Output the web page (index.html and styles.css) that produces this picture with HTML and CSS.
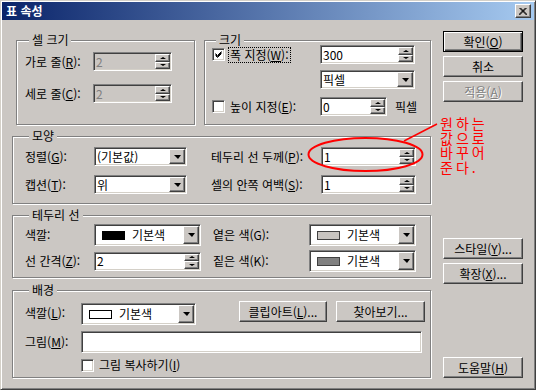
FILE: index.html
```html
<!DOCTYPE html>
<html lang="ko">
<head>
    <meta charset="UTF-8">
    <title>표 속성</title>
    <link rel="stylesheet" href="styles.css">
</head>
<body>
    <div class="window">
        <div class="titlebar">
            <span class="title">표 속성</span>
            <span class="close-btn">
                <svg width="8" height="7" viewBox="0 0 8 7"><path d="M0.5 0 L7.5 7 M1.5 0 L8.5 7 M6.5 0 L-0.5 7 M7.5 0 L0.5 7" stroke="#000" stroke-width="1" fill="none"/></svg>
            </span>
        </div>

        <div class="content">
            <div class="main">
                <div class="row-top">
                    <!-- 셀 크기 -->
                    <div class="group group-cell">
                        <div class="group-title">셀 크기</div>
                        <div class="line cell-row">
                            <span class="lbl cell-lbl">가로 줄(<u>R</u>):</span>
                            <div class="field disabled cell-field">
                                <span class="val">2</span>
                                <span class="spin"><span class="spin-btn up"></span><span class="spin-btn down"></span></span>
                            </div>
                        </div>
                        <div class="line cell-row">
                            <span class="lbl cell-lbl">세로 줄(<u>C</u>):</span>
                            <div class="field disabled cell-field">
                                <span class="val">2</span>
                                <span class="spin"><span class="spin-btn up"></span><span class="spin-btn down"></span></span>
                            </div>
                        </div>
                    </div>

                    <!-- 크기 -->
                    <div class="group group-size">
                        <div class="group-title">크기</div>
                        <div class="line size-row1">
                            <div class="chk-cell">
                                <span class="check">
                                    <svg width="7" height="7" viewBox="0 0 7 7"><path d="M0.5 2.5 L2.5 4.5 L6.5 0.5 M0.5 3.5 L2.5 5.5 L6.5 1.5 M0.5 4.5 L2.5 6.5 L6.5 2.5" stroke="#000" stroke-width="1" fill="none"/></svg>
                                </span>
                                <span class="lbl focus">폭 지정(<u>W</u>):</span>
                            </div>
                            <div class="field size-field">
                                <span class="val">300</span>
                                <span class="spin"><span class="spin-btn up"></span><span class="spin-btn down"></span></span>
                            </div>
                        </div>
                        <div class="line size-row2">
                            <div class="combo size-field">
                                <span class="val">픽셀</span>
                                <span class="drop"></span>
                            </div>
                        </div>
                        <div class="line size-row3">
                            <div class="chk-cell">
                                <span class="check"></span>
                                <span class="lbl chk-lbl">높이 지정(<u>E</u>):</span>
                            </div>
                            <div class="field height-field">
                                <span class="val">0</span>
                                <span class="spin"><span class="spin-btn up"></span><span class="spin-btn down"></span></span>
                            </div>
                            <span class="lbl unit">픽셀</span>
                        </div>
                    </div>
                </div>

                <!-- 모양 -->
                <div class="group group-shape">
                    <div class="group-title">모양</div>
                    <div class="shape-grid">
                        <span class="lbl">정렬(<u>G</u>):</span>
                        <div class="combo shape-combo">
                            <span class="val">(기본값)</span>
                            <span class="drop"></span>
                        </div>
                        <span class="lbl">테두리 선 두께(<u>P</u>):</span>
                        <div class="field">
                            <span class="val">1</span>
                            <span class="spin"><span class="spin-btn up"></span><span class="spin-btn down"></span></span>
                        </div>

                        <span class="lbl">캡션(<u>T</u>):</span>
                        <div class="combo shape-combo">
                            <span class="val">위</span>
                            <span class="drop"></span>
                        </div>
                        <span class="lbl">셀의 안쪽 여백(<u>S</u>):</span>
                        <div class="field">
                            <span class="val">1</span>
                            <span class="spin"><span class="spin-btn up"></span><span class="spin-btn down"></span></span>
                        </div>
                    </div>
                </div>

                <!-- 테두리 선 -->
                <div class="group group-border">
                    <div class="group-title">테두리 선</div>
                    <div class="border-grid">
                        <span class="lbl">색깔:</span>
                        <div class="combo tall color-combo">
                            <span class="val"><span class="swatch black"></span>기본색</span>
                            <span class="drop"></span>
                        </div>
                        <span class="lbl">옅은 색(G):</span>
                        <div class="combo tall">
                            <span class="val"><span class="swatch light"></span>기본색</span>
                            <span class="drop"></span>
                        </div>

                        <span class="lbl">선 간격(<u>Z</u>):</span>
                        <div class="field color-combo">
                            <span class="val">2</span>
                            <span class="spin"><span class="spin-btn up"></span><span class="spin-btn down"></span></span>
                        </div>
                        <span class="lbl">짙은 색(K):</span>
                        <div class="combo tall">
                            <span class="val"><span class="swatch dark"></span>기본색</span>
                            <span class="drop"></span>
                        </div>
                    </div>
                </div>

                <!-- 배경 -->
                <div class="group group-bg">
                    <div class="group-title">배경</div>
                    <div class="line bg-row1">
                        <span class="lbl bg-lbl">색깔(<u>L</u>):</span>
                        <div class="combo tall bg-combo">
                            <span class="val"><span class="swatch white"></span>기본색</span>
                            <span class="drop"></span>
                        </div>
                        <span class="btn clip-btn">클립아트(<u>L</u>)...</span>
                        <span class="btn browse-btn">찾아보기...</span>
                    </div>
                    <div class="line bg-row2">
                        <span class="lbl bg-lbl">그림(<u>M</u>):</span>
                        <div class="field tall pic-field"><span class="val"></span></div>
                    </div>
                    <div class="line bg-row3">
                        <span class="check"></span>
                        <span class="lbl chk-lbl">그림 복사하기(<u>I</u>)</span>
                    </div>
                </div>
            </div>

            <div class="side">
                <span class="btn default">확인(<u>O</u>)</span>
                <span class="btn">취소</span>
                <span class="btn disabled">적용(<u>A</u>)</span>
                <span class="btn style-btn">스타일(<u>Y</u>)...</span>
                <span class="btn">확장(<u>X</u>)...</span>
                <span class="btn help-btn">도움말(<u>H</u>)</span>
            </div>
        </div>

        <!-- 빨간 메모 -->
        <svg class="note-mark" width="536" height="390" viewBox="0 0 536 390">
            <ellipse cx="365.5" cy="154.5" rx="57" ry="16.5" stroke="#ff0000" stroke-width="2" fill="none"/>
            <line x1="404" y1="141" x2="437" y2="124" stroke="#ff0000" stroke-width="1.5"/>
        </svg>
        <div class="note">
            <div>원하는</div>
            <div>값으로</div>
            <div>바꾸어</div>
            <div>준다.</div>
        </div>
    </div>
</body>
</html>
```

FILE: styles.css
```css
* {
    box-sizing: border-box;
}
body {
    margin: 0;
    font-family: "Noto Sans CJK KR", "Noto Sans", sans-serif;
    font-size: 12px;
    color: #000;
    background-color: #cbc7c3;
}
u {
    text-underline-offset: 1px;
}

/* 창 */
.window {
    position: relative;
    width: 536px;
    height: 390px;
    padding: 1px;
    background-color: #cbc7c3;
    border: 1px solid;
    border-color: #d4d0c8 #404040 #404040 #d4d0c8;
    box-shadow: inset 1px 1px #fff, inset -1px -1px #808080;
}
.titlebar {
    display: flex;
    align-items: center;
    height: 18px;
    padding: 0 3px 0 4px;
    background: linear-gradient(to right, #0a246a, #a6caf0);
}
.title {
    color: #fff;
    font-weight: bold;
    line-height: 14px;
}
.close-btn {
    display: flex;
    align-items: center;
    justify-content: center;
    width: 16px;
    height: 14px;
    margin-left: auto;
    background-color: #cbc7c3;
    border: 1px solid;
    border-color: #fff #404040 #404040 #fff;
    box-shadow: inset -1px -1px #808080;
}

.content {
    display: flex;
    padding-left: 10px;
}
.main {
    width: 419px;
    padding-top: 20px;
}
.side {
    display: flex;
    flex-direction: column;
    width: 80px;
    margin-left: 12px;
    padding-top: 11px;
}

/* 그룹 상자 */
.group {
    display: flex;
    flex-direction: column;
    border: 1px solid #808080;
    box-shadow: 1px 1px #fff, inset 1px 1px #fff;
}
.group-title {
    align-self: flex-start;
    margin: -8px 0 -6px 4px;
    padding: 0 3px;
    line-height: 14px;
    background-color: #cbc7c3;
}
.row-top {
    display: flex;
    padding-left: 4px;
}
.group-cell {
    width: 179px;
    height: 85px;
    padding-left: 8px;
}
.group-size {
    width: 227px;
    height: 85px;
    margin-left: 9px;
    padding-left: 7px;
}
.group-shape {
    height: 68px;
    margin-top: 11px;
    padding-left: 12px;
}
.group-border {
    height: 63px;
    margin-top: 11px;
    padding-left: 12px;
}
.group-bg {
    height: 88px;
    margin-top: 12px;
    padding-left: 12px;
}

.line {
    display: flex;
    align-items: center;
}
.lbl {
    line-height: 14px;
    white-space: nowrap;
}

/* 셀 크기 */
.cell-row {
    margin-top: 11px;
}
.cell-row + .cell-row {
    margin-top: 13px;
}
.cell-lbl {
    width: 68px;
}
.cell-field {
    width: 79px;
}

/* 크기 */
.size-row1 {
    margin-top: 4px;
}
.size-row2 {
    margin-top: 6px;
    padding-left: 108px;
}
.size-row3 {
    margin-top: 8px;
}
.chk-cell {
    display: flex;
    align-items: center;
    width: 108px;
}
.focus {
    margin-left: 3px;
    padding: 0 1px;
    border: 1px dotted #000;
}
.chk-lbl {
    margin-left: 5px;
}
.size-field {
    width: 95px;
}
.height-field {
    width: 67px;
}
.unit {
    margin-left: 8px;
}

/* 모양 */
.shape-grid {
    display: grid;
    grid-template-columns: 69px 117px 110px 95px;
    grid-auto-rows: 19px;
    row-gap: 9px;
    align-items: center;
    margin-top: 10px;
}
.shape-combo {
    width: 93px;
}

/* 테두리 선 */
.border-grid {
    display: grid;
    grid-template-columns: 69px 119px 96px 107px;
    grid-auto-rows: 22px;
    row-gap: 4px;
    align-items: center;
    margin-top: 8px;
}
.color-combo {
    width: 107px;
}

/* 배경 */
.bg-row1 {
    align-items: flex-start;
    margin-top: 10px;
}
.bg-row1 .lbl {
    margin-top: 5px;
}
.bg-lbl {
    width: 56px;
}
.bg-combo {
    width: 115px;
    margin-top: 2px;
}
.clip-btn {
    width: 88px;
    height: 22px;
    margin-left: 43px;
}
.browse-btn {
    width: 89px;
    height: 22px;
    margin-left: 9px;
}
.bg-row2 {
    margin-top: 5px;
}
.pic-field {
    width: 341px;
}
.bg-row3 {
    margin-top: 5px;
    padding-left: 56px;
}

/* 입력 칸 */
.field,
.combo {
    display: flex;
    height: 19px;
    padding: 1px;
    background-color: #fff;
    border: 1px solid;
    border-color: #808080 #fff #fff #808080;
    box-shadow: inset 1px 1px #404040, inset -1px -1px #d4d0c8;
}
.field.tall,
.combo.tall {
    height: 22px;
}
.field.disabled {
    background-color: #cbc7c3;
}
.field.disabled .val {
    color: #808080;
}
.val {
    display: flex;
    align-items: center;
    flex: 1;
    padding-left: 1px;
    line-height: 14px;
    white-space: nowrap;
    overflow: hidden;
}
.spin {
    display: flex;
    flex-direction: column;
    width: 15px;
}
.spin-btn {
    display: flex;
    align-items: center;
    justify-content: center;
    flex: 1;
    background-color: #cbc7c3;
    border: 1px solid;
    border-color: #fff #404040 #404040 #fff;
    box-shadow: inset -1px -1px #808080;
}
.spin-btn::before {
    content: "";
    border-left: 3px solid transparent;
    border-right: 3px solid transparent;
}
.spin-btn.up::before {
    border-bottom: 2px solid #000;
}
.spin-btn.down::before {
    border-top: 2px solid #000;
}
.drop {
    display: flex;
    align-items: center;
    justify-content: center;
    width: 16px;
    background-color: #cbc7c3;
    border: 1px solid;
    border-color: #fff #404040 #404040 #fff;
    box-shadow: inset -1px -1px #808080;
}
.drop::before {
    content: "";
    border-left: 4px solid transparent;
    border-right: 3px solid transparent;
    border-top: 4px solid #000;
}
.swatch {
    width: 23px;
    height: 9px;
    margin: 0 7px 0 5px;
    border: 1px solid #000;
}
.swatch.black {
    background-color: #000;
}
.swatch.light {
    background-color: #c8c4c0;
    border-color: #404040;
}
.swatch.dark {
    background-color: #808080;
    border-color: #404040;
}
.swatch.white {
    background-color: #fff;
}

/* 체크 상자 */
.check {
    display: flex;
    align-items: center;
    justify-content: center;
    flex: none;
    width: 13px;
    height: 13px;
    background-color: #fff;
    border: 1px solid;
    border-color: #808080 #fff #fff #808080;
    box-shadow: inset 1px 1px #404040, inset -1px -1px #d4d0c8;
}

/* 버튼 */
.btn {
    display: flex;
    align-items: center;
    justify-content: center;
    height: 21px;
    margin-bottom: 4px;
    line-height: 14px;
    white-space: nowrap;
    background-color: #cbc7c3;
    border: 1px solid;
    border-color: #fff #404040 #404040 #fff;
    box-shadow: inset -1px -1px #808080;
}
.btn.default {
    border-color: #000;
    box-shadow: inset 1px 1px #fff, inset -1px -1px #404040, inset -2px -2px #808080;
}
.btn.disabled {
    color: #808080;
    text-shadow: 1px 1px #fff;
}
.style-btn {
    margin-top: 132px;
}
.help-btn {
    margin-top: 69px;
}

/* 빨간 메모 */
.note-mark {
    position: absolute;
    left: -1px;
    top: -1px;
    pointer-events: none;
}
.note {
    position: absolute;
    left: 439px;
    top: 115px;
    color: #ff0000;
    font-size: 14px;
    line-height: 14.5px;
    letter-spacing: 3px;
    white-space: nowrap;
}
.note div {
    height: 14.5px;
}
```
